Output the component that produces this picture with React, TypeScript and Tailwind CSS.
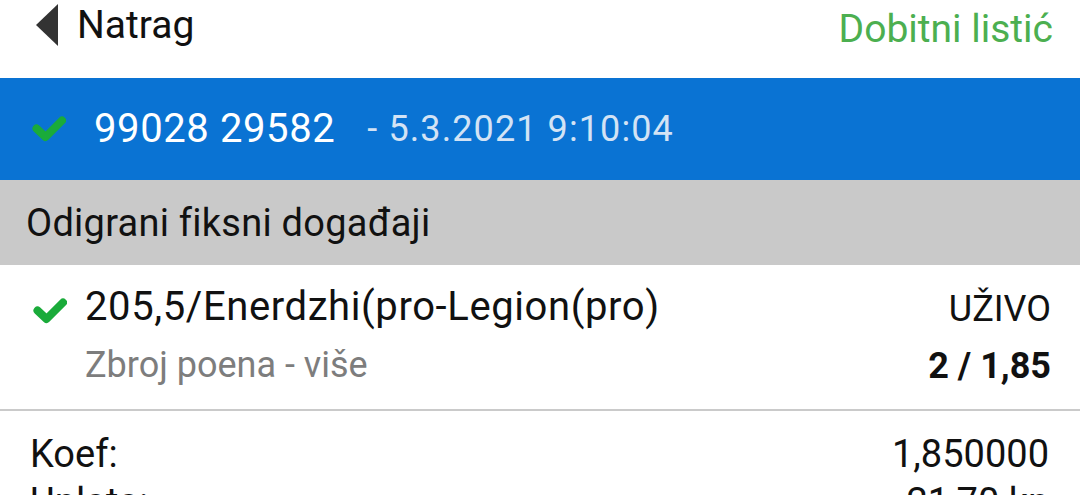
import React from "react";

function Check() {
  return (
    <svg width="34" height="26" viewBox="0 0 34 26" className="shrink-0">
      <path d="M4.5 12.5 L13.5 21 L30 4.5" fill="none" stroke="#1aab3a" strokeWidth="8" strokeLinecap="round" strokeLinejoin="round" />
    </svg>
  );
}

export default function App() {
  return (
    <div className="w-[1080px] h-[495px] overflow-hidden bg-white text-[#111] font-['Roboto',sans-serif]">
      {/* header */}
      <div className="h-[78px] flex justify-between items-start">
        <div className="flex items-start pl-[36px]">
          <svg width="22" height="42" viewBox="0 0 22 42" className="mt-[4px]">
            <path d="M22 0 L0 21 L22 42 Z" fill="#333" />
          </svg>
          <span className="ml-[19px] mt-[6px] text-[39px] leading-none">Natrag</span>
        </div>
        <span className="mt-[10px] pr-[27px] text-[39px] leading-none text-[#4caf50]">Dobitni listić</span>
      </div>

      {/* blue bar */}
      <div className="h-[102px] bg-[#0a73d3] flex items-center pl-[32px]">
        <Check />
        <span className="ml-[28px] text-[40px] leading-none tracking-[0.6px] text-white">99028 29582</span>
        <span className="ml-[32px] text-[36px] leading-none tracking-[1.1px] text-[#d3e3f5]">- 5.3.2021 9:10:04</span>
      </div>

      {/* gray section */}
      <div className="h-[85px] bg-[#c9c9c9] flex items-center pl-[26px]">
        <span className="text-[38px] leading-none tracking-[0.25px]">Odigrani fiksni događaji</span>
      </div>

      {/* event row */}
      <div className="h-[144px] flex items-start pl-[33px] pr-[29px]">
        <div className="mt-[33px]">
          <Check />
        </div>
        <div className="ml-[18px] flex-1 flex flex-col pt-[22px] gap-[20px]">
          <span className="text-[40px] leading-none tracking-[0.6px]">205,5/Enerdzhi(pro-Legion(pro)</span>
          <span className="text-[36px] leading-none text-[#7d7d7d]">Zbroj poena - više</span>
        </div>
        <div className="flex flex-col items-end pt-[26px] gap-[21px]">
          <span className="text-[36px] leading-none">UŽIVO</span>
          <span className="text-[36px] leading-none font-bold">2 / 1,85</span>
        </div>
      </div>
      <div className="h-[2px] bg-[#cacaca]" />

      {/* totals */}
      <div className="pt-[19px] pl-[30px] pr-[31px] text-[38px] leading-[48px]">
        <div className="flex justify-between">
          <span>Koef:</span>
          <span>1,850000</span>
        </div>
        <div className="flex justify-between">
          <span>Uplata:</span>
          <span>21,70 kn</span>
        </div>
      </div>
    </div>
  );
}
